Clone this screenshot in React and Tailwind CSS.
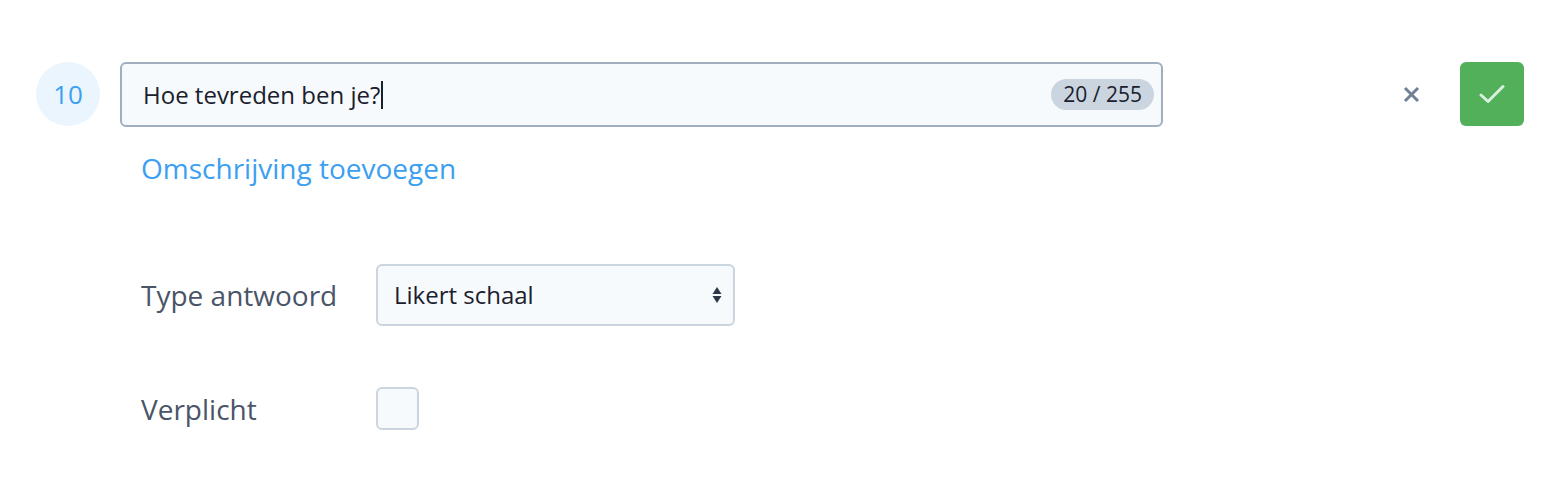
import React from "react";

function App() {
  return (
    <div
      className="w-[1562px] h-[494px] bg-white text-[#2d3748]"
      style={{ fontFamily: '"Open Sans", sans-serif' }}
    >
      <div className="flex items-start pl-[36px] pr-[38px] pt-[62px]">
        <div className="w-16 h-16 rounded-full bg-[#ebf5fe] flex items-center justify-center text-[26px] leading-none text-[#3c9fef] shrink-0">
          10
        </div>

        <div className="flex-1 ml-5">
          <div className="relative h-[65px] rounded-md border-2 border-[#a0aec0] bg-[#f7fafc] flex items-center pl-[21px] pr-[6px]">
            <span className="text-[24px] leading-none text-[#1a202c]">Hoe tevreden ben je?</span>
            <span className="w-[2px] h-[28px] bg-[#1a202c] ml-[1px]"></span>
            <span className="ml-auto mr-[1px] h-[31px] px-[12px] rounded-full bg-[#cbd5e0] text-[21px] leading-none text-[#1a202c] flex items-center">
              20 / 255
            </span>
          </div>

          <div className="mt-[22px] pl-[21px] text-[28px] text-[#3c9fef] leading-[38px]">
            Omschrijving toevoegen
          </div>

          <div className="mt-[77px] pl-[21px] flex items-center">
            <div className="w-[235px] text-[28px] leading-[38px] text-[#4a5568]">Type antwoord</div>
            <div className="w-[359px] h-[62px] rounded-md border-2 border-[#cbd5e0] bg-[#f7fafc] flex items-center pl-[16px] pr-[11px]">
              <span className="text-[24px] leading-none text-[#1a202c]">Likert schaal</span>
              <svg className="ml-auto" width="10" height="18" viewBox="0 0 10 18">
                <path d="M5 1 L9.5 8 L0.5 8 Z" fill="#2d3748" />
                <path d="M5 17 L9.5 10 L0.5 10 Z" fill="#2d3748" />
              </svg>
            </div>
          </div>

          <div className="mt-[61px] pl-[21px] flex items-center">
            <div className="w-[235px] text-[28px] leading-[38px] text-[#4a5568]">Verplicht</div>
            <div className="w-[43px] h-[43px] rounded-md border-2 border-[#cbd5e0] bg-[#f7fafc]"></div>
          </div>
        </div>

        <div className="w-[361px] flex items-center justify-end h-16 shrink-0">
          <button className="w-12 h-12 flex items-center justify-center mr-[25px]">
            <svg width="17" height="17" viewBox="0 0 17 17">
              <path d="M2 2 L15 15 M15 2 L2 15" stroke="#718096" strokeWidth="3" strokeLinecap="butt" />
            </svg>
          </button>
          <button className="w-16 h-16 rounded-md bg-[#52b05a] flex items-center justify-center">
            <svg width="26" height="20" viewBox="0 0 26 20">
              <path d="M2 11 L9 17.5 L24 2.5" stroke="#dbf0dc" strokeWidth="3" fill="none" strokeLinecap="round" strokeLinejoin="round" />
            </svg>
          </button>
        </div>
      </div>
    </div>
  );
}

export default App;
